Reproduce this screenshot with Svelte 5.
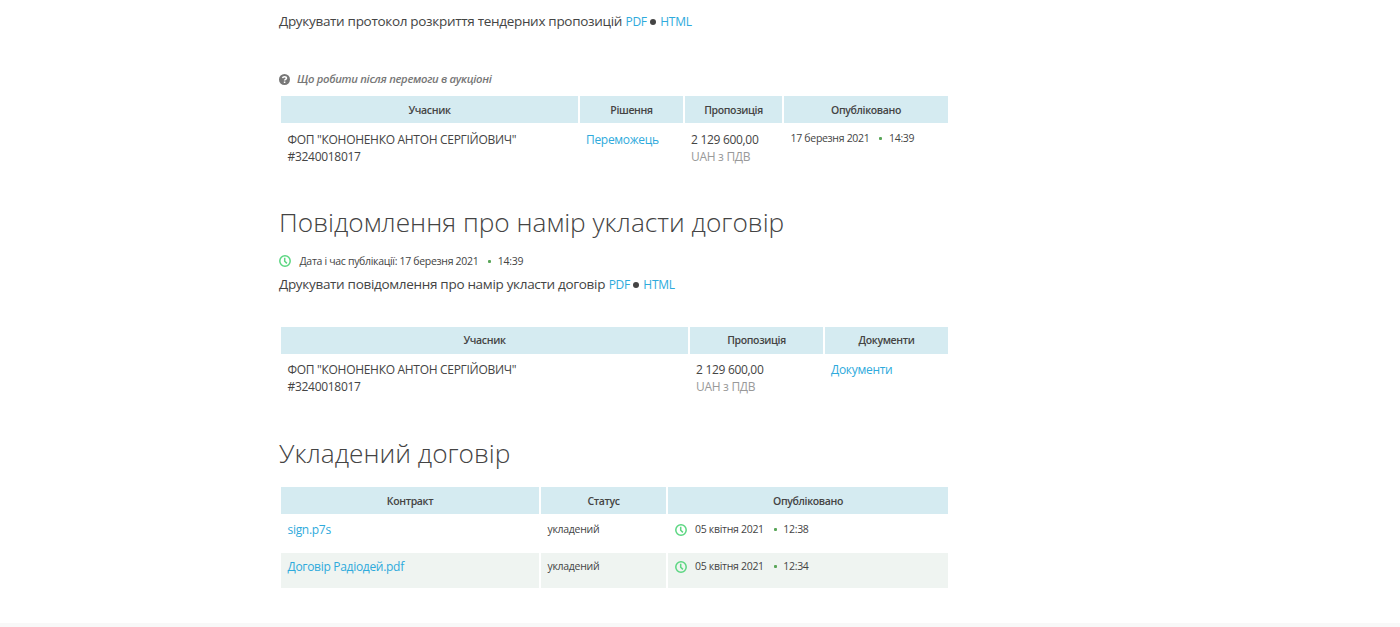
<script lang="ts">
  const participant = {
    name: 'ФОП "КОНОНЕНКО АНТОН СЕРГІЙОВИЧ"',
    code: '#3240018017',
    amount: '2 129 600,00',
    currency: 'UAH з ПДВ',
  };

  const contracts = [
    { file: 'sign.p7s', status: 'укладений', date: '05 квітня 2021', time: '12:38' },
    { file: 'Договір Радіодей.pdf', status: 'укладений', date: '05 квітня 2021', time: '12:34' },
  ];
</script>

{#snippet clock()}
  <svg class="clock" viewBox="0 0 12 12" aria-hidden="true">
    <circle cx="6" cy="6" r="5.2" />
    <path d="M5.7 2.8v3.4l2.2 2.2" />
  </svg>
{/snippet}

{#snippet stamp(date: string, time: string)}
  <span class="stamp">{date}<i class="dot"></i>{time}</span>
{/snippet}

{#snippet printLinks()}
  <a href="#pdf">PDF</a><i class="bullet"></i><a href="#html">HTML</a>
{/snippet}

<main class="page">
  <p class="print">
    <span class="label">Друкувати протокол розкриття тендерних пропозицій</span>
    {@render printLinks()}
  </p>

  <p class="hint">
    <svg class="question" viewBox="0 0 12 12" aria-hidden="true">
      <circle cx="6" cy="6" r="6" />
      <path d="M3.9 4.6C4.1 3.4 4.9 2.9 6 2.9c1.2 0 2.1.6 2.1 1.6 0 1.4-2 1.3-2 2.7M6.1 8.1v1.6" />
    </svg>
    <span class="hint-text">Що робити після перемоги в аукціоні</span>
  </p>

  <table class="awards">
    <colgroup><col class="c1" /><col class="c2" /><col class="c3" /><col class="c4" /></colgroup>
    <thead>
      <tr><th>Учасник</th><th>Рішення</th><th>Пропозиція</th><th>Опубліковано</th></tr>
    </thead>
    <tbody>
      <tr>
        <td>{participant.name}<br />{participant.code}</td>
        <td><a href="#award">Переможець</a></td>
        <td>{participant.amount}<br /><span class="muted">{participant.currency}</span></td>
        <td class="small">{@render stamp('17 березня 2021', '14:39')}</td>
      </tr>
    </tbody>
  </table>

  <h2>Повідомлення про намір укласти договір</h2>
  <p class="published">
    {@render clock()}
    <span>Дата і час публікації: {@render stamp('17 березня 2021', '14:39')}</span>
  </p>
  <p class="print second">
    <span class="label">Друкувати повідомлення про намір укласти договір</span>
    {@render printLinks()}
  </p>

  <table class="intent">
    <colgroup><col class="c1" /><col class="c2" /><col class="c3" /></colgroup>
    <thead>
      <tr><th>Учасник</th><th>Пропозиція</th><th>Документи</th></tr>
    </thead>
    <tbody>
      <tr>
        <td>{participant.name}<br />{participant.code}</td>
        <td>{participant.amount}<br /><span class="muted">{participant.currency}</span></td>
        <td><a href="#docs">Документи</a></td>
      </tr>
    </tbody>
  </table>

  <h2>Укладений договір</h2>
  <table class="contracts">
    <colgroup><col class="c1" /><col class="c2" /><col class="c3" /></colgroup>
    <thead>
      <tr><th>Контракт</th><th>Статус</th><th>Опубліковано</th></tr>
    </thead>
    <tbody>
      {#each contracts as item}
        <tr>
          <td><a href="#file">{item.file}</a></td>
          <td class="small">{item.status}</td>
          <td class="small">
            <div class="signed">{@render clock()}{@render stamp(item.date, item.time)}</div>
          </td>
        </tr>
      {/each}
    </tbody>
  </table>
</main>
<div class="footer"></div>

<style>
  :global(body) {
    background: #fff;
    overflow: hidden;
  }

  .page {
    box-sizing: border-box;
    width: 671px;
    height: 623px;
    margin-left: 279px;
    padding-top: 11px;
    color: #444;
    font-family: 'Open Sans', sans-serif;
    font-size: 12px;
    line-height: 16.5px;
    letter-spacing: -0.3px;
  }

  a {
    color: #2eaadc;
    text-decoration: none;
  }

  p {
    display: flex;
    align-items: center;
    margin: 0;
    white-space: nowrap;
  }

  .print {
    height: 20px;
  }

  .print a {
    padding-top: 2px;
  }

  .print .label {
    margin-right: 3.5px;
    font-size: 13.5px;
    letter-spacing: -0.31px;
  }

  .bullet {
    width: 6px;
    height: 6px;
    margin: 1px 4px 0 3.5px;
    border-radius: 50%;
    background: #444;
  }

  .hint {
    height: 16px;
    margin-top: 40px;
    color: #777;
  }

  .question {
    width: 11px;
    height: 11px;
    margin-right: 7px;
    fill: #777;
  }

  .question path {
    fill: none;
    stroke: #fff;
    stroke-width: 1.7;
  }

  .hint-text {
    font-size: 11.25px;
    font-weight: 600;
    font-style: italic;
    letter-spacing: -0.3px;
  }

  table {
    width: 671px;
    border-spacing: 2px;
    table-layout: fixed;
  }

  th,
  td {
    box-sizing: border-box;
    text-align: left;
    vertical-align: top;
  }

  th {
    height: 27px;
    padding: 1px 0 0;
    background: #d5ebf1;
    font-size: 10.5px;
    font-weight: 600;
    text-align: center;
    vertical-align: middle;
    letter-spacing: -0.35px;
  }

  td {
    padding: 6px;
    font-size: 12px;
  }

  td:first-child {
    padding-left: 6.5px;
  }

  td.small {
    font-size: 10.5px;
    line-height: 15.5px;
    letter-spacing: -0.3px;
    padding-left: 6.5px;
  }

  .muted {
    color: #999;
  }

  .dot {
    display: inline-block;
    width: 3px;
    height: 3px;
    margin: 0 6.5px 2px 10px;
    border-radius: 1px;
    background: #5aa659;
  }

  .clock {
    flex: none;
    width: 12px;
    height: 12px;
    margin-right: 8.5px;
    fill: none;
    stroke: #5bd681;
    stroke-width: 1.5;
  }

  .awards {
    height: 85px;
    margin-top: 7px;
  }

  .awards td:not(.small) {
    padding-top: 7px;
  }

  .awards .c1 { width: 297px; }
  .awards .c2 { width: 103px; }
  .awards .c3 { width: 97px; }
  .awards .c4 { width: 164px; }

  h2 {
    height: 38px;
    margin: 24px 0 0;
    font-size: 26.25px;
    font-weight: 300;
    line-height: 38px;
    letter-spacing: 0;
    white-space: nowrap;
  }

  .published {
    height: 16px;
    margin-top: 12px;
    font-size: 10.5px;
    letter-spacing: -0.31px;
  }

  .second {
    margin-top: 5px;
  }

  .intent {
    height: 85px;
    margin-top: 31px;
  }

  .intent th {
    padding-top: 0;
  }

  .intent .c1 { width: 407px; }
  .intent .c2 { width: 133px; }
  .intent .c3 { width: 123px; }

  .contracts {
    margin-top: 13px;
  }

  .contracts .c1 { width: 258px; }
  .contracts .c2 { width: 125px; }
  .contracts .c3 { width: 280px; }

  .contracts td {
    height: 35px;
  }

  .contracts tbody tr:nth-child(even) td {
    background: #eff4f1;
  }

  .signed {
    display: flex;
    align-items: center;
  }

  .footer {
    height: 4px;
    background: #f8f8f8;
  }
</style>
